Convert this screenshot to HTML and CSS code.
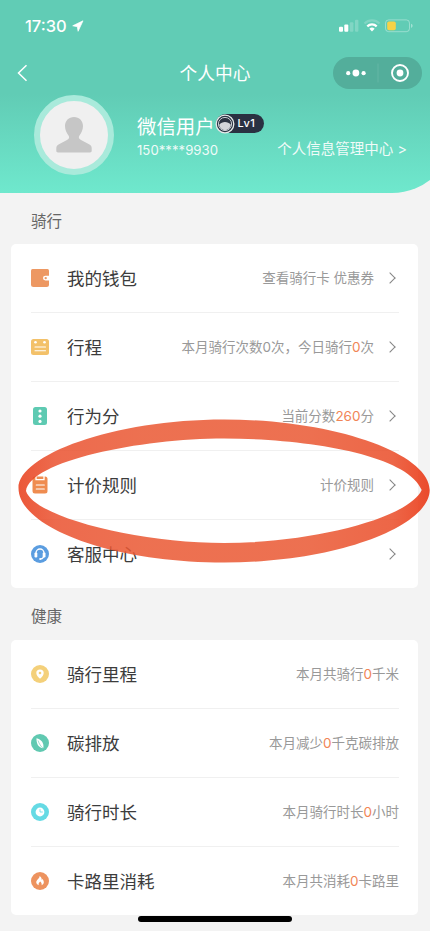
FILE: index.html
```html
<!DOCTYPE html>
<html lang="zh-CN">
<head>
<meta charset="utf-8">
<meta name="viewport" content="width=device-width, initial-scale=1">
<title>个人中心</title>
<link rel="stylesheet" href="styles.css">
</head>
<body>
<div class="page">
  <header class="hero">
    <div class="status">
      <div class="clock">17:30
        <svg class="loc" width="12" height="12" viewBox="0 0 12 12"><path d="M11 .8.7 5.8l4.6.9.8 4.6z" fill="#fff" stroke="#fff" stroke-width=".7" stroke-linejoin="round"/></svg>
      </div>
      <svg class="indicators" width="76" height="14" viewBox="0 0 76 14">
        <g fill="#fff"><rect x="0" y="7.7" width="4" height="5" rx="1"/><rect x="5.3" y="5.6" width="4" height="7.1" rx="1"/><g opacity=".2"><rect x="10.8" y="3.2" width="3.6" height="9.5" rx="1"/><rect x="16" y=".7" width="3.4" height="12" rx="1"/></g></g>
        <path d="M25.5 4.6a10.5 10.5 0 0 1 15 0" fill="none" stroke="#fff" stroke-opacity=".2" stroke-width="2.2"/>
        <path d="M28.3 7.4a6.7 6.7 0 0 1 9.4 0" fill="none" stroke="#fff" stroke-width="2.2"/>
        <path d="M30.4 9.7a4 4 0 0 1 5.2 0L33 12.6z" fill="#fff"/>
        <rect x="46.5" y=".9" width="24" height="11.8" rx="3.2" fill="none" stroke="#fff" stroke-opacity=".35"/>
        <rect x="48.2" y="2.5" width="8.6" height="8.7" rx="1.8" fill="#f7d247"/>
        <path d="M72.2 4.8c1.8.8 1.8 3.3 0 4.1z" fill="#fff" opacity=".5"/>
      </svg>
    </div>
    <div class="nav">
      <svg class="back" width="12" height="18" viewBox="0 0 12 18"><path d="M10.500 1.300 2.500 9l8 7.700" fill="none" stroke="#fff" stroke-width="1.5"/></svg>
      <h1>个人中心</h1>
      <div class="capsule">
        <svg width="89" height="32" viewBox="0 0 89 32"><g fill="#fff"><circle cx="15.2" cy="16.2" r="2.1"/><circle cx="22.9" cy="16" r="3.4"/><circle cx="30.6" cy="16.2" r="2.1"/><circle cx="67" cy="16" r="3.4"/></g><circle cx="67" cy="16" r="8" fill="none" stroke="#fff" stroke-width="1.9"/><path d="M45 6.5v19" stroke="#fff" stroke-opacity=".1"/></svg>
      </div>
    </div>
    <div class="profile">
      <div class="avatar"><svg width="36" height="36" viewBox="0 0 36 36"><path fill="#c6c6c6" d="M18 0c5.200 0 9 3.900 9 9 0 4-1.700 7-3.500 9.400-1.200 1.600-.8 3.300 1.500 4.500l8.500 4.600c1.500.8 2.200 2 2.200 3.700v2.600c0 1.100-.6 1.700-1.700 1.700H2c-1.100 0-1.700-.6-1.700-1.700v-2.600c0-1.700.7-2.900 2.200-3.700L11 22.900c2.300-1.200 2.700-2.900 1.500-4.500C10.700 16 9 13 9 9c0-5.100 3.800-9 9-9z"/></svg></div>
      <div class="who">
        <div class="name-line"><span class="name">微信用户</span>
          <span class="level"><svg width="20" height="20" viewBox="0 0 20 20"><circle cx="10" cy="10" r="8.800" fill="#2b3545" stroke="#e6eaea" stroke-width="1.300"/><circle cx="10" cy="10" r="6.600" fill="#2c3341" stroke="#c7cbd0" stroke-width="1"/><path d="M4.200 10.800c3-3.800 8.600-3.800 11.600 0-.8 7-10.800 7-11.600 0z" fill="#d2d4d8"/></svg>Lv1</span>
        </div>
        <div class="phone-line"><span class="phone">150****9930</span><span class="manage">个人信息管理中心 &gt;</span></div>
      </div>
    </div>
  </header>

  <h2>骑行</h2>
  <section class="card">
    <div class="row">
      <svg class="icon" viewBox="0 0 18 18"><path d="M1.500 0h15q1.500 0 1.500 1.500v14a2.500 2.500 0 0 1-2.500 2.500h-13A2.500 2.500 0 0 1 0 15.500v-14Q0 0 1.500 0z" fill="#ed9862"/><path d="M18 6.700h-3.600a2.400 2.400 0 0 0 0 4.800H18z" fill="#fff"/><circle cx="14.700" cy="9.100" r="1.200" fill="#ed9862"/></svg>
      <span class="label">我的钱包</span><span class="value">查看骑行卡 优惠券</span><i class="chevron"></i>
    </div>
    <div class="row">
      <svg class="icon" viewBox="0 0 18 18"><rect y="1" width="18" height="16" rx="2.500" fill="#f3c169"/><g fill="#fff"><circle cx="4.500" cy="4.200" r="1.300"/><circle cx="13.500" cy="4.200" r="1.300"/></g><path d="M4 9h10.500M4 12.700h10.500" stroke="#fff" stroke-width="1.100" stroke-linecap="round"/></svg>
      <span class="label">行程</span><span class="value">本月骑行次数0次，今日骑行<em>0</em>次</span><i class="chevron"></i>
    </div>
    <div class="row">
      <svg class="icon" viewBox="0 0 18 18"><rect x="2" width="14" height="18" rx="2.500" fill="#5ecab2"/><g fill="#fff"><circle cx="9" cy="4" r="1.600"/><circle cx="9" cy="9.200" r="1.600"/><circle cx="9" cy="14.400" r="1.600"/></g></svg>
      <span class="label">行为分</span><span class="value">当前分数<em>260</em>分</span><i class="chevron"></i>
    </div>
    <div class="row">
      <svg class="icon" viewBox="0 0 18 18"><rect x="1.500" y=".5" width="15" height="17" rx="2.500" fill="#ef8c50"/><path d="M5 0v3.700h8V0" fill="none" stroke="#fff" stroke-width="1.300"/><path d="M5.300 9h8M5.300 13h8" stroke="#fff" stroke-width="1.200" stroke-linecap="round"/></svg>
      <span class="label">计价规则</span><span class="value">计价规则</span><i class="chevron"></i>
    </div>
    <div class="row">
      <svg class="icon" viewBox="0 0 18 18"><circle cx="9" cy="9" r="9" fill="#5b9de0"/><path d="M5 9V8a4 4 0 0 1 8 0v1.500c0 2.800-1.200 4.200-3.600 4.500" fill="none" stroke="#fff" stroke-width="1.300"/><rect x="3.500" y="7.400" width="2.800" height="5" rx="1.200" fill="#fff"/><rect x="11.700" y="7.400" width="2.800" height="5" rx="1.200" fill="#fff"/><circle cx="9.200" cy="14" r="1" fill="#fff"/></svg>
      <span class="label">客服中心</span><span class="value"></span><i class="chevron"></i>
    </div>
    <svg class="marker" width="412" height="144" viewBox="0 0 412 144">
      <defs><linearGradient id="ink"><stop offset="0" stop-color="#e83c18"/><stop offset=".09" stop-color="#ea5230"/><stop offset=".3" stop-color="#ea5934"/><stop offset=".7" stop-color="#ea5934"/><stop offset=".91" stop-color="#ea4d29"/><stop offset="1" stop-color="#e92f0b"/></linearGradient></defs>
      <path fill="url(#ink)" fill-opacity=".86" fill-rule="evenodd" d="M.5 69C.5 36 95 .5 206 .5S411.700 35 411.700 71 320 143.500 206 143.500.5 108 .5 69zM8 72C16 98 120 124 206 124S390 100 403.700 71C390 36 290 19.500 206 19.500S12 42 8 72z"/>
    </svg>
  </section>

  <h2 class="second">健康</h2>
  <section class="card">
    <div class="row">
      <svg class="icon" viewBox="0 0 18 18"><circle cx="9" cy="9" r="9" fill="#f4d07a"/><path d="M9 13.800C6.500 11.600 5.300 9.900 5.300 8.100a3.700 3.700 0 0 1 7.400 0c0 1.800-1.200 3.500-3.700 5.700z" fill="#fff"/><circle cx="9" cy="8" r="1.300" fill="#f4d07a"/></svg>
      <span class="label">骑行里程</span><span class="value">本月共骑行<em>0</em>千米</span>
    </div>
    <div class="row">
      <svg class="icon" viewBox="0 0 18 18"><circle cx="9" cy="9" r="9" fill="#60c9b1"/><path d="M5.500 4.200c4.500 1 7.800 4.500 6.800 10-4.800-.5-7-4.500-6.800-10z" fill="#fff"/><path d="M7 6.500c1.200 3.500 2.700 5.700 5.300 8" fill="none" stroke="#60c9b1" stroke-width=".6"/></svg>
      <span class="label">碳排放</span><span class="value">本月减少<em>0</em>千克碳排放</span>
    </div>
    <div class="row">
      <svg class="icon" viewBox="0 0 18 18"><circle cx="9" cy="9" r="9" fill="#65dae4"/><circle cx="9" cy="9" r="4.400" fill="#fff"/><path d="M9 6.200V9h2.800" fill="none" stroke="#65dae4" stroke-width=".8"/></svg>
      <span class="label">骑行时长</span><span class="value">本月骑行时长<em>0</em>小时</span>
    </div>
    <div class="row">
      <svg class="icon" viewBox="0 0 18 18"><circle cx="9" cy="9" r="9" fill="#ed935f"/><path d="M8.600 4c2 1.300 2.200 2.600 2.100 3.900l.9-.8c1.800 2.700 1.700 5-1 6.200.4-1.600-.2-2.800-1.400-3.900-1.400 1.200-1.900 2.400-1.400 3.900-2.700-1-3.300-3.200-1.700-5.200 1.500-1.500 2.500-2.400 2.500-4.100z" fill="#fff"/></svg>
      <span class="label">卡路里消耗</span><span class="value">本月共消耗<em>0</em>卡路里</span>
    </div>
  </section>
  <div class="home-bar"></div>
</div>
</body>
</html>
```
FILE: styles.css
```css
* { box-sizing: border-box; }
body {
  margin: 0;
  background: #f3f3f3;
  color: #3c3c3c;
  font-family: "Liberation Sans", "Noto Sans CJK SC", sans-serif;
}
.page { position: relative; height: 931px; overflow: hidden; }
h1, h2 { margin: 0; font-weight: 400; }
em { font-style: normal; color: #f18556; }
svg { display: block; flex: none; }

/* The hero runs past the right edge so only part of its round corner shows. */
.hero {
  width: 454px;
  height: 193px;
  padding-right: 24px;
  color: #fff;
  background: linear-gradient(#61ccb5 0, #61ccb5 94px, #6fe8cd 193px);
  border-bottom-right-radius: 62px;
}
.status {
  height: 52px;
  padding: 0 15px 0 25px;
  display: flex;
  justify-content: space-between;
  align-items: center;
}
.clock {
  display: flex;
  align-items: center;
  gap: 5px;
  font: 500 16.5px/20px Inter, sans-serif;
}
.nav {
  height: 42px;
  padding: 0 8px 0 16px;
  display: grid;
  grid-template-columns: 89px 1fr 89px;
  align-items: center;
}
.nav h1 { font-size: 17.7px; text-align: center; margin: -3px 0 0 -8px; }
.capsule { height: 32px; border-radius: 16px; background: #53ae9b; }
.profile { display: flex; padding: 1px 23px 0 34px; }
.avatar {
  width: 80px;
  height: 80px;
  border: 6px solid #a9eadb;
  border-radius: 50%;
  background: #f0f0f0;
  display: flex;
  align-items: center;
  justify-content: center;
}
.who { flex: 1; margin-left: 23px; padding-top: 17px; }
.name-line { display: flex; height: 28px; align-items: center; }
.name { font-size: 19.4px; line-height: 28px; padding-top: 1px; }
.level {
  display: flex;
  align-items: center;
  gap: 3px;
  width: 48px;
  height: 19px;
  margin: -5px 0 0 1px;
  border-radius: 10px;
  background: #2a3142;
  font: 500 11px/19px Inter, sans-serif;
  letter-spacing: .4px;
  white-space: nowrap;
}
.level svg { margin-left: -1px; }
.phone-line {
  display: flex;
  justify-content: space-between;
  align-items: center;
  height: 18px;
  opacity: .9;
}
.phone { font: 400 13.2px/18px Inter, sans-serif; padding-top: 1px; }
.manage {
  font-family: Inter, "Noto Sans CJK SC", sans-serif;
  font-size: 14.5px;
  line-height: 18px;
  white-space: nowrap;
}

h2 {
  height: 51px;
  padding: 17px 0 0 31px;
  font-size: 15.5px;
  line-height: 24px;
  color: #666;
}
h2.second { padding-top: 17px; height: 52px; }
.card {
  position: relative;
  margin: 0 12px 0 11px;
  border-radius: 5px;
  background: #fff;
}
.row {
  display: flex;
  align-items: center;
  height: 69px;
  margin: 0 19px 0 20px;
  border-bottom: 1.500px solid #f0f0f0;
}
.row:last-of-type { height: 68px; border-bottom: 0; }
.icon { width: 18px; height: 18px; }
.label {
  margin-left: 18px;
  padding-top: 2px;
  font-size: 17.5px;
  line-height: 26px;
}
.value {
  margin-left: auto;
  padding-bottom: 1px;
  font-family: Inter, "Noto Sans CJK SC", sans-serif;
  font-size: 13.5px;
  line-height: 20px;
  color: #999;
}
.chevron {
  width: 8px;
  height: 8px;
  margin: 0 5px 0 12px;
  border: solid #858585;
  border-width: 1.600px 1.600px 0 0;
  transform: rotate(45deg);
}
.marker { position: absolute; left: 7px; top: 175px; z-index: 1; }
.home-bar {
  position: absolute;
  left: 138px;
  bottom: 9px;
  width: 154px;
  height: 6px;
  border-radius: 3px;
  background: #000;
}
```
